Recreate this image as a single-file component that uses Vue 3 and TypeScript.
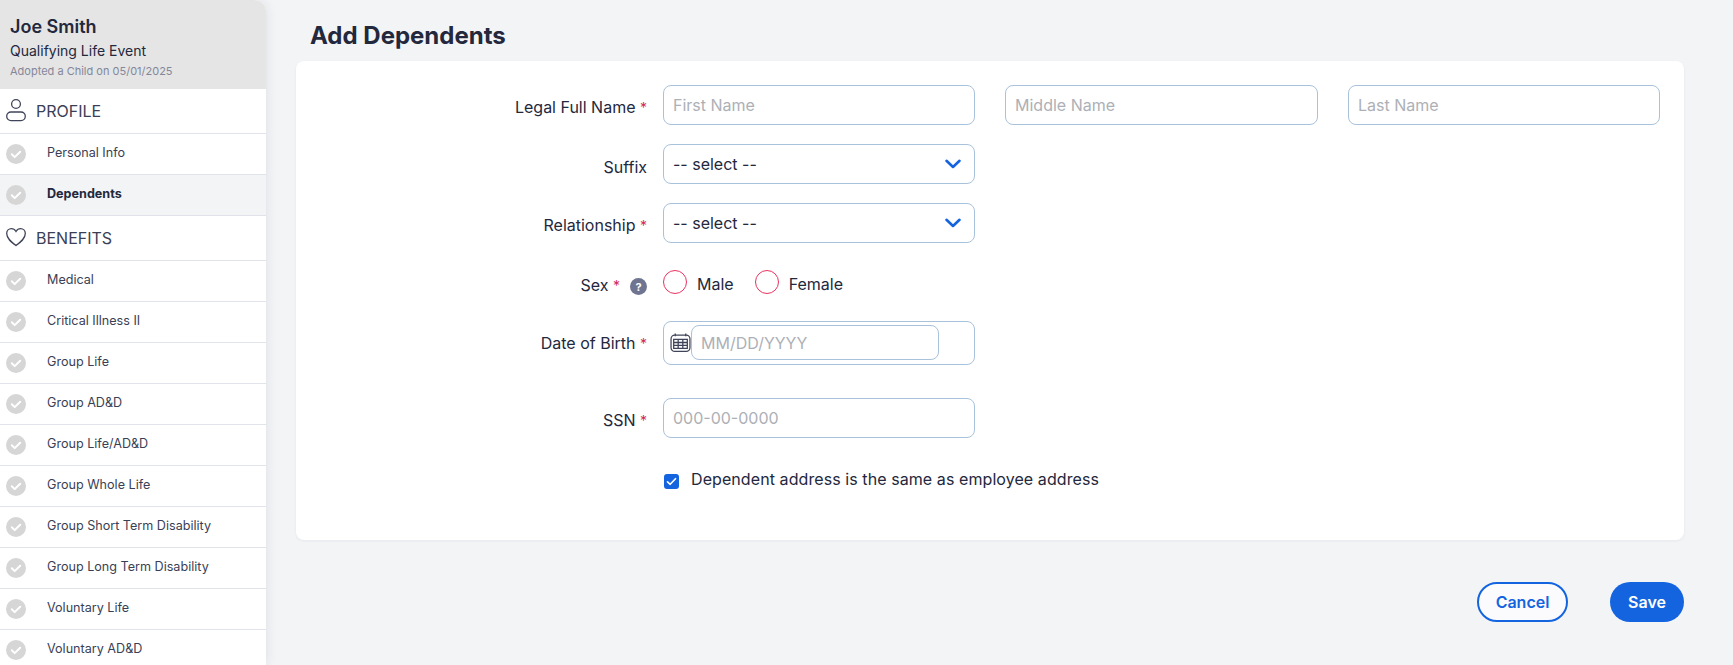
<script setup lang="ts">
const profile: string[] = ['Personal Info', 'Dependents']
const benefits: string[] = [
  'Medical', 'Critical Illness II', 'Group Life', 'Group AD&D', 'Group Life/AD&D', 'Group Whole Life',
  'Group Short Term Disability', 'Group Long Term Disability', 'Voluntary Life', 'Voluntary AD&D',
]
</script>

<template>
  <div class="page">
    <aside class="sidebar">
      <header class="who">
        <div class="name">Joe Smith</div>
        <div class="event">Qualifying Life Event</div>
        <div class="detail">Adopted a Child on 05/01/2025</div>
      </header>
      <div class="section">
        <svg class="sec-icon" width="22" height="26" viewBox="0 0 22 26" fill="none" stroke="#3f4458" stroke-width="1.3">
          <circle cx="11" cy="6" r="4.4" />
          <rect x="1.7" y="14" width="18.6" height="8.6" rx="4.3" />
        </svg>
        <span>PROFILE</span>
      </div>
      <div v-for="p in profile" :key="p" class="item" :class="{ active: p === 'Dependents' }">
        <svg class="check" width="20" height="20" viewBox="0 0 20 20">
          <circle cx="10" cy="10" r="10" fill="#d6d6d6" />
          <path d="M5.8 10.3l2.9 2.8 5.5-5.4" fill="none" stroke="#fff" stroke-width="2" stroke-linecap="round" stroke-linejoin="round" />
        </svg>
        <span>{{ p }}</span>
      </div>
      <div class="section">
        <svg class="sec-icon" width="22" height="22" viewBox="0 0 22 22" fill="none" stroke="#3f4458" stroke-width="1.3">
          <path d="M11 18.6C6 14.800 1.700 11.400 1.700 6.600 1.700 3.600 3.900 1.700 6.400 1.700c1.900 0 3.500 1 4.600 2.800 1.100-1.800 2.700-2.800 4.600-2.800 2.500 0 4.700 1.900 4.700 4.900 0 4.800-4.300 8.200-9.300 12z" />
        </svg>
        <span>BENEFITS</span>
      </div>
      <div v-for="b in benefits" :key="b" class="item">
        <svg class="check" width="20" height="20" viewBox="0 0 20 20">
          <circle cx="10" cy="10" r="10" fill="#d6d6d6" />
          <path d="M5.8 10.3l2.9 2.8 5.5-5.4" fill="none" stroke="#fff" stroke-width="2" stroke-linecap="round" stroke-linejoin="round" />
        </svg>
        <span>{{ b }}</span>
      </div>
    </aside>

    <main class="main">
      <h1 class="title">Add Dependents</h1>
      <section class="card">
        <div class="row first">
          <label class="label">Legal Full Name <i>*</i></label>
          <input class="field" placeholder="First Name" />
          <input class="field wide" placeholder="Middle Name" />
          <input class="field" placeholder="Last Name" />
        </div>
        <div class="row gap19">
          <label class="label">Suffix</label>
          <div class="field select">
            <span>-- select --</span>
            <svg width="16" height="10" viewBox="0 0 16 10" fill="none" stroke="#1464e0" stroke-width="2.600" stroke-linecap="round" stroke-linejoin="round"><path d="M1.500 1.800L8 8l6.500-6.200" /></svg>
          </div>
        </div>
        <div class="row gap19">
          <label class="label">Relationship <i>*</i></label>
          <div class="field select">
            <span>-- select --</span>
            <svg width="16" height="10" viewBox="0 0 16 10" fill="none" stroke="#1464e0" stroke-width="2.600" stroke-linecap="round" stroke-linejoin="round"><path d="M1.500 1.800L8 8l6.500-6.200" /></svg>
          </div>
        </div>
        <div class="row sex">
          <label class="label">Sex <i>*</i><b class="help">?</b></label>
          <div class="radios">
            <span class="radio"></span><span class="radio-text male">Male</span>
            <span class="radio"></span><span class="radio-text">Female</span>
          </div>
        </div>
        <div class="row dob">
          <label class="label">Date of Birth <i>*</i></label>
          <div class="date">
            <svg class="cal" width="21" height="21" viewBox="0 0 20 20" fill="none" stroke="#3f4458" stroke-width="1.200">
              <rect x="1" y="3" width="18" height="15.500" rx="3.500" />
              <path d="M5 1.500v2.500M15 1.500v2.500M3.500 7h13v8.500h-13zM3.500 10h13M3.500 12.800h13M7.800 7v8.500M12.200 7v8.500" />
            </svg>
            <input class="inner" placeholder="MM/DD/YYYY" />
          </div>
        </div>
        <div class="row ssn">
          <label class="label">SSN <i>*</i></label>
          <input class="field" placeholder="000-00-0000" />
        </div>
        <div class="row agree">
          <span class="box">
            <svg width="11" height="9" viewBox="0 0 11 9" fill="none" stroke="#fff" stroke-width="1.600" stroke-linecap="round" stroke-linejoin="round"><path d="M1.500 4.800l2.700 2.500 5.300-5.600" /></svg>
          </span>
          <span class="agree-text">Dependent address is the same as employee address</span>
        </div>
      </section>
      <div class="actions">
        <button class="btn cancel">Cancel</button>
        <button class="btn save">Save</button>
      </div>
    </main>
  </div>
</template>

<style>
html, body { margin: 0; background: #f3f4f6; }
</style>

<style scoped>
.page {
  display: flex;
  height: 665px;
  overflow: hidden;
  background: #f3f4f6;
  font-family: Inter, "Liberation Sans", sans-serif;
  color: #23283d;
}
.sidebar {
  width: 266px;
  flex: none;
  height: 665px;
  overflow: hidden;
  background: #fff;
  border-top-right-radius: 12px;
  box-shadow: 0 0 12px rgba(30, 40, 60, 0.1);
}
.who {
  height: 89px;
  box-sizing: border-box;
  padding: 16px 10px 0;
  background: #e5e5e5;
}
.name { font-size: 18px; font-weight: 600; line-height: 22px; }
.event { font-size: 14px; line-height: 18px; margin-top: 4px; }
.detail { font-size: 11px; line-height: 14px; margin-top: 4px; color: #84879a; }
.section {
  display: flex;
  align-items: center;
  height: 44px;
  padding-left: 5px;
  border-bottom: 1px solid #e0e4ea;
  font-size: 16px;
  color: #3a3f55;
}
.sec-icon { flex: none; margin-right: 9px; width: 22px; }
.item {
  display: flex;
  align-items: center;
  height: 40px;
  padding-left: 6px;
  border-bottom: 1px solid #e0e4ea;
  font-size: 12.6px;
  color: #3a3f55;
}
.item span { margin-left: 21px; margin-top: -3px; }
.check { flex: none; }
.item.active { background: #f3f4f6; }
.item.active span { font-weight: 700; color: #23283d; }
.main {
  flex: 1;
  min-width: 0;
  padding: 0 49px 0 30px;
}
.title {
  margin: 0;
  height: 61px;
  box-sizing: border-box;
  padding: 21px 0 0 14px;
  font-size: 24px;
  line-height: 30px;
  font-weight: 700;
  color: #23283d;
}
.card {
  height: 479px;
  box-sizing: border-box;
  padding: 24px 22px 0 0;
  background: #fff;
  border-radius: 8px;
  box-shadow: 0 1px 3px rgba(30, 40, 60, 0.06);
}
.row { display: flex; align-items: center; }
.label {
  width: 351px;
  flex: none;
  margin-right: 16px;
  text-align: right;
  font-size: 16px;
  line-height: 20px;
  color: #23283d;
  padding-top: 5px;
  box-sizing: border-box;
}
.label i { font-style: normal; color: #d2295a; font-size: 14px; }
.field {
  width: 312px;
  height: 40px;
  flex: none;
  box-sizing: border-box;
  border: 1px solid #a9c2dc;
  border-radius: 8px;
  padding: 0 9px;
  font: 16px Inter, "Liberation Sans", sans-serif;
  color: #23283d;
  background: #fff;
  outline: none;
}
.field + .field { margin-left: 30px; }
.field.wide { width: 313px; }
input::placeholder { color: #adb0b6; opacity: 1; }
.gap19 { margin-top: 19px; }
.select {
  display: flex;
  align-items: center;
  justify-content: space-between;
  padding-right: 13px;
}
.sex { margin-top: 27px; height: 24px; }
.sex .label { padding-top: 6px; }
.help {
  display: inline-flex;
  align-items: center;
  justify-content: center;
  width: 17px;
  height: 17px;
  margin-left: 10px;
  border-radius: 50%;
  background: #6f7590;
  color: #fff;
  font-size: 11px;
  font-weight: 700;
  vertical-align: 0;
}
.radios { display: flex; align-items: center; font-size: 16px; }
.radio {
  width: 24px;
  height: 24px;
  box-sizing: border-box;
  border: 1px solid #e8325f;
  border-radius: 50%;
  background: #fff;
}
.radio-text { margin-left: 10px; margin-top: 3px; }
.radio-text.male { margin-right: 21px; }
.dob { margin-top: 27px; }
.dob .label { padding-top: 1px; }
.date {
  width: 312px;
  height: 44px;
  box-sizing: border-box;
  display: flex;
  align-items: center;
  padding: 0 0 1px 6px;
  border: 1px solid #a9c2dc;
  border-radius: 8px;
}
.cal { flex: none; }
.inner {
  width: 248px;
  height: 35px;
  box-sizing: border-box;
  margin-left: 0;
  padding: 0 9px;
  border: 1px solid #a9c2dc;
  border-radius: 8px;
  font: 16px Inter, "Liberation Sans", sans-serif;
  outline: none;
}
.ssn { margin-top: 33px; }
.agree { margin-top: 35px; padding-left: 368px; }
.box {
  width: 15px;
  height: 15px;
  display: flex;
  align-items: center;
  justify-content: center;
  border-radius: 3px;
  background: #1464e0;
}
.agree-text { margin-left: 12px; font-size: 16px; margin-top: -4px; letter-spacing: 0.08px; }
.actions {
  display: flex;
  justify-content: flex-end;
  gap: 42px;
  margin-top: 42px;
}
.btn {
  height: 40px;
  box-sizing: border-box;
  border-radius: 20px;
  font: 600 16px Inter, "Liberation Sans", sans-serif;
}
.cancel {
  width: 91px;
  background: #fbfbfd;
  color: #1464e0;
  border: 2px solid #1464e0;
}
.save {
  width: 74px;
  background: #1464e0;
  color: #fff;
  border: none;
}
</style>
